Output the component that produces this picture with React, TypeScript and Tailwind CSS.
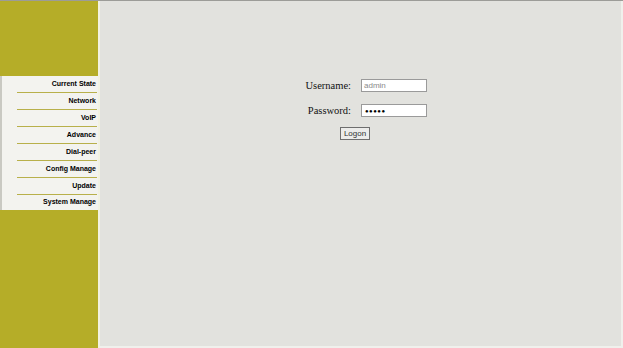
import React from 'react';

const menu = [
  'Current State',
  'Network',
  'VoIP',
  'Advance',
  'Dial-peer',
  'Config Manage',
  'Update',
  'System Manage',
];

export default function App() {
  return (
    <div className="flex h-[348px] w-[623px] overflow-hidden border-t border-[#9c9c98] bg-[#e2e2de]">
      {/* left menu column */}
      <div className="flex w-[98px] shrink-0 flex-col bg-[#b5ad28]">
        <div className="h-[75px] shrink-0" />
        <div className="flex flex-col border-l-2 border-[#c9c9c2] bg-[#f3f3ef] font-['Liberation_Sans',Arial,sans-serif] text-[7px] font-bold text-black">
          {menu.map((item, i) => (
            <div key={item} className="flex flex-col">
              <div
                className={`flex items-center justify-end pr-[2px] ${
                  i === menu.length - 1 ? 'h-[15px]' : 'h-[16px]'
                }`}
              >
                {item}
              </div>
              {i < menu.length - 1 && <div className="ml-[15px] mr-px h-px bg-[#b8b04a]" />}
            </div>
          ))}
        </div>
        <div className="flex-1" />
      </div>
      <div className="w-[2px] shrink-0 bg-[#f2f2e2]" />

      {/* main area */}
      <div className="flex flex-1 flex-col border-r-2 border-b-2 border-[#f0f0ec] pl-[205px] pt-[78px]">
        <div className="grid grid-cols-[46px_66px] items-center gap-x-[10px] gap-y-[12px] font-['Liberation_Serif','Times_New_Roman',serif] text-[10.5px] leading-[13px] text-[#111]">
          <span className="whitespace-nowrap text-right">Username:</span>
          <div className="flex h-[13px] items-center border border-[#9a9a9a] bg-white pl-[2px] font-['Liberation_Sans',Arial,sans-serif] text-[8px] text-[#8a8a8a]">
            admin
          </div>
          <span className="whitespace-nowrap text-right">Password:</span>
          <div className="flex h-[13px] items-center border border-[#9a9a9a] bg-white pl-[3px] font-['Liberation_Sans',Arial,sans-serif] text-[6px] leading-none tracking-[0.5px] text-black">
            ●●●●●
          </div>
        </div>
        <div className="mt-[10px] flex pl-[35px]">
          <button className="flex h-[13px] w-[30px] items-center justify-center border border-[#6e6e6e] bg-[#ececea] font-['Liberation_Sans',Arial,sans-serif] text-[8px] text-[#333]">
            Logon
          </button>
        </div>
      </div>
    </div>
  );
}
